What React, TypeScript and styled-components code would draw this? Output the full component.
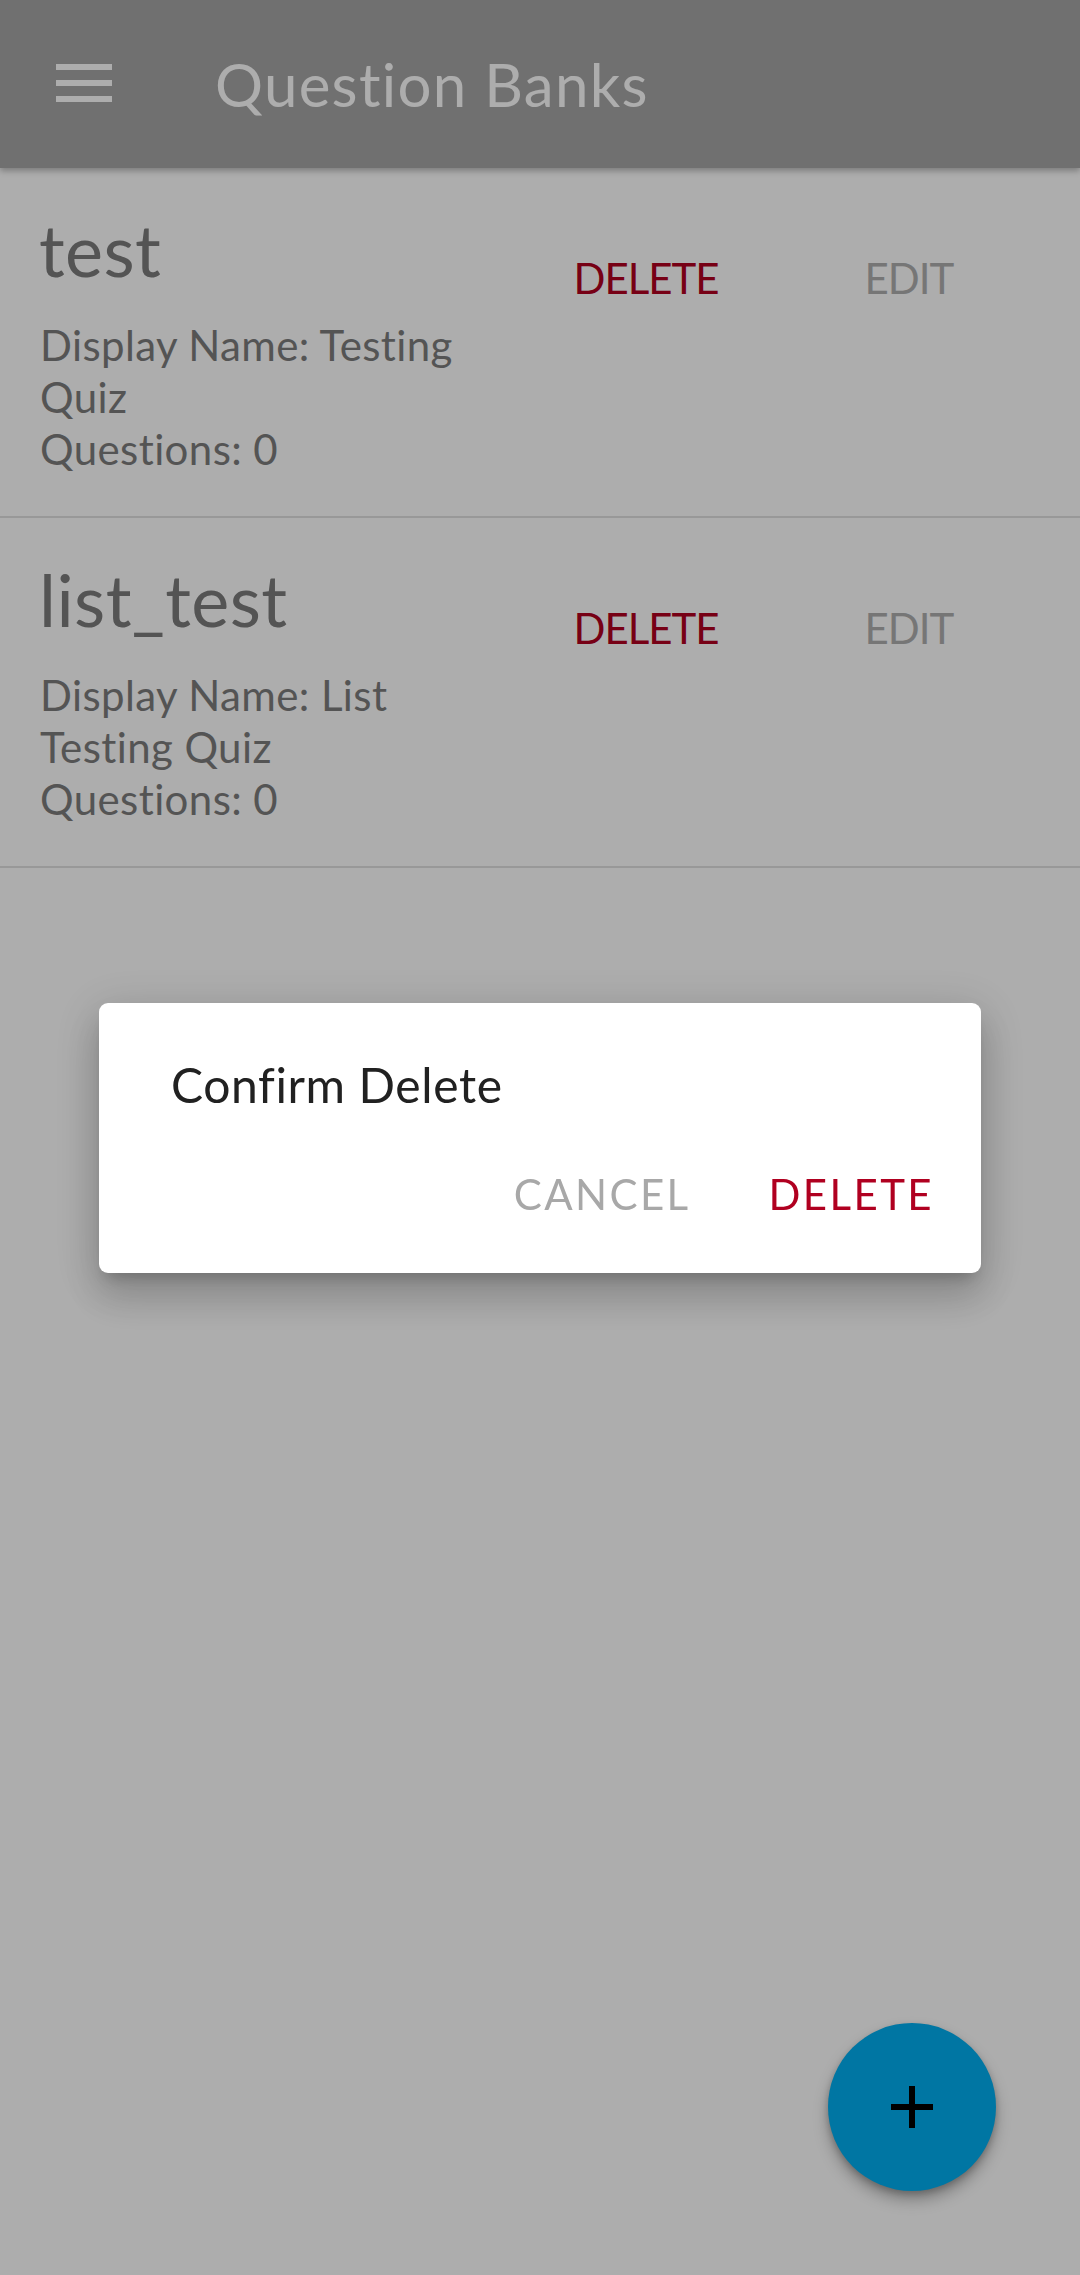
import React from "react";
import styled, { createGlobalStyle } from "styled-components";

const GlobalStyle = createGlobalStyle`
  html, body {
    margin: 0;
    padding: 0;
    background: #ffffff;
  }
  body {
    font-family: "Lato", "Open Sans", sans-serif;
    -webkit-font-smoothing: antialiased;
  }
  * { box-sizing: border-box; }
`;

const Screen = styled.div`
  position: relative;
  width: 1080px;
  min-height: 2275px;
  background: #ffffff;
`;

const AppBar = styled.header`
  display: flex;
  align-items: center;
  height: 168px;
  padding-left: 56px;
  background: #a5a5a5;
  box-shadow: 0 3px 6px rgba(0, 0, 0, 0.28);
  position: relative;
  z-index: 1;
`;

const MenuIcon = styled.svg`
  display: block;
  width: 56px;
  height: 38px;
  margin-top: -2px;
  flex: none;
`;

const AppTitle = styled.h1`
  margin: 0 0 0 103px;
  font-size: 60px;
  line-height: 72px;
  font-weight: 400;
  letter-spacing: 1.3px;
  color: #ffffff;
`;

const BankList = styled.main`
  display: flex;
  flex-direction: column;
`;

const BankRow = styled.section`
  display: flex;
  align-items: flex-start;
  height: 350px;
  padding: 39px 0 0 40px;
  border-bottom: 2px solid #e0e0e0;
`;

const BankInfo = styled.div`
  display: flex;
  flex-direction: column;
  width: 481px;
  flex: none;
`;

const BankName = styled.h2`
  margin: 0 0 28px -1px;
  font-size: 72px;
  line-height: 84px;
  font-weight: 400;
  letter-spacing: 0.4px;
  color: #7d7d7d;
`;

const BankMeta = styled.p`
  margin: 0;
  font-size: 42px;
  line-height: 52px;
  letter-spacing: 0.4px;
  color: #7d7d7d;
`;

const Actions = styled.div`
  display: flex;
  gap: 73px;
  margin: 17px 0 0 30px;
`;

const ActionButton = styled.button<{ $tone: "danger" | "muted" }>`
  width: 190px;
  height: 108px;
  padding: 0;
  border: 0;
  background: transparent;
  font-family: inherit;
  font-size: 42px;
  line-height: 108px;
  letter-spacing: -1px;
  font-weight: 400;
  text-align: center;
  color: ${(p) => (p.$tone === "danger" ? "#b00020" : "#afafaf")};
`;

const Fab = styled.button`
  position: absolute;
  right: 84px;
  top: 2023px;
  width: 168px;
  height: 168px;
  border-radius: 50%;
  border: 0;
  padding: 0;
  display: flex;
  align-items: center;
  justify-content: center;
  background: #00aff0;
  box-shadow: 0 9px 15px rgba(0, 0, 0, 0.28), 0 3px 6px rgba(0, 0, 0, 0.2);
`;

const Scrim = styled.div`
  position: fixed;
  inset: 0;
  display: flex;
  align-items: center;
  justify-content: center;
  background: rgba(0, 0, 0, 0.32);
  z-index: 10;
`;

const Dialog = styled.div`
  width: 882px;
  height: 270px;
  padding: 54px 23px 0 74px;
  background: #ffffff;
  border-radius: 9px;
  display: flex;
  flex-direction: column;
  box-shadow: 0 11px 15px -7px rgba(0, 0, 0, 0.2),
    0 24px 38px 3px rgba(0, 0, 0, 0.14), 0 9px 46px 8px rgba(0, 0, 0, 0.12);
`;

const DialogTitle = styled.h2`
  margin: 0 0 0 -2px;
  font-size: 48px;
  line-height: 56px;
  font-weight: 400;
  letter-spacing: 0.6px;
  color: #212121;
`;

const DialogActions = styled.div`
  display: flex;
  justify-content: flex-end;
  gap: 30px;
  margin-top: 27px;
`;

const DialogButton = styled.button<{ $tone: "danger" | "muted" }>`
  height: 108px;
  padding: 0 24px;
  border: 0;
  background: transparent;
  font-family: inherit;
  font-size: 42px;
  line-height: 108px;
  letter-spacing: 2.4px;
  font-weight: 400;
  color: ${(p) => (p.$tone === "danger" ? "#b00020" : "#a8a8a8")};
`;

const banks = [
  { id: "test", displayName: "Testing Quiz", questions: 0 },
  { id: "list_test", displayName: "List Testing Quiz", questions: 0 },
];

export default function App() {
  return (
    <>
      <GlobalStyle />
      <Screen>
        <AppBar>
          <MenuIcon viewBox="0 0 56 38" aria-label="Menu">
            <rect x="0" y="0" width="56" height="6" fill="#ffffff" />
            <rect x="0" y="16" width="56" height="6" fill="#ffffff" />
            <rect x="0" y="32" width="56" height="6" fill="#ffffff" />
          </MenuIcon>
          <AppTitle>Question Banks</AppTitle>
        </AppBar>
        <BankList>
          {banks.map((b) => (
            <BankRow key={b.id}>
              <BankInfo>
                <BankName>{b.id}</BankName>
                <BankMeta>Display Name: {b.displayName}</BankMeta>
                <BankMeta>Questions: {b.questions}</BankMeta>
              </BankInfo>
              <Actions>
                <ActionButton $tone="danger">DELETE</ActionButton>
                <ActionButton $tone="muted">EDIT</ActionButton>
              </Actions>
            </BankRow>
          ))}
        </BankList>
        <Fab aria-label="Add">
          <svg width="42" height="42" viewBox="0 0 42 42">
            <rect x="18" y="0" width="6" height="42" fill="#000000" />
            <rect x="0" y="18" width="42" height="6" fill="#000000" />
          </svg>
        </Fab>
        <Scrim>
          <Dialog role="dialog">
            <DialogTitle>Confirm Delete</DialogTitle>
            <DialogActions>
              <DialogButton $tone="muted">CANCEL</DialogButton>
              <DialogButton $tone="danger">DELETE</DialogButton>
            </DialogActions>
          </Dialog>
        </Scrim>
      </Screen>
    </>
  );
}
